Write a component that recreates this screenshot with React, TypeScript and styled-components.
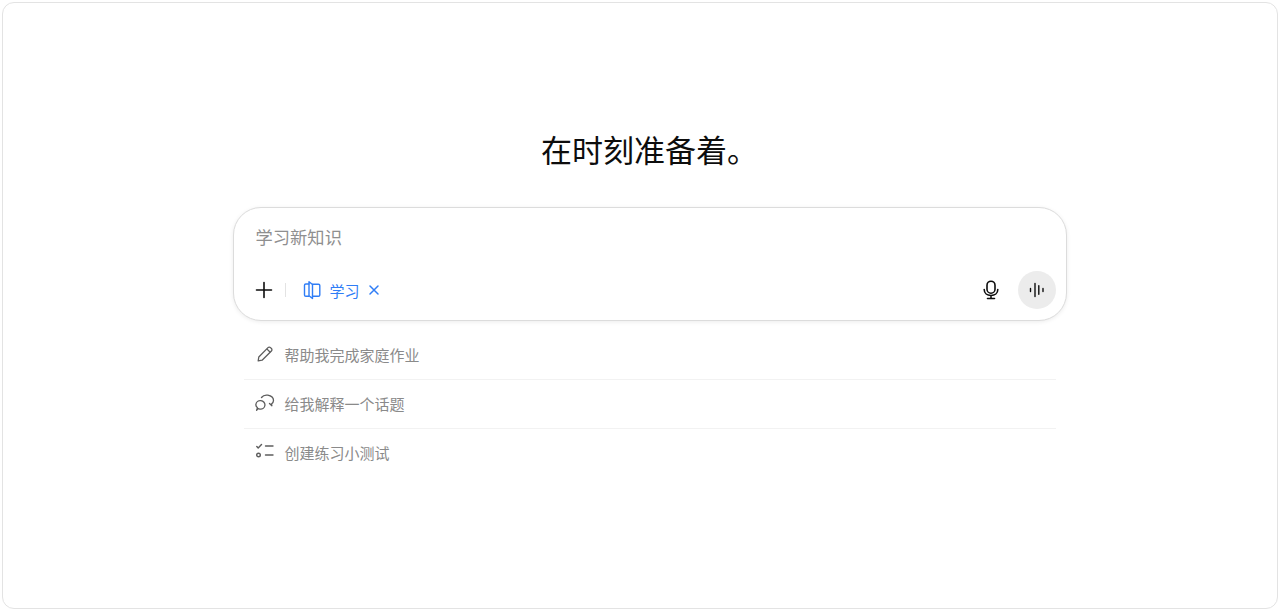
import React from "react";
import styled, { createGlobalStyle } from "styled-components";

const GlobalStyle = createGlobalStyle`
    html, body {
        margin: 0;
        padding: 0;
        height: 100%;
        background: #ffffff;
        font-family: "Inter", "Liberation Sans", "Noto Sans CJK SC", sans-serif;
    }
    #root {
        height: 100%;
    }
`;

const Page = styled.div`
    box-sizing: border-box;
    height: 611px;
    padding: 2px;
`;

const Frame = styled.main`
    box-sizing: border-box;
    height: 607px;
    border: 1px solid #e3e3e3;
    border-radius: 12px;
    display: flex;
    flex-direction: column;
    align-items: center;
    padding-top: 125px;
    padding-left: 19px;
`;

const Title = styled.h1`
    margin: 0 0 37px;
    font-size: 31px;
    line-height: 42px;
    font-weight: 400;
    color: #0d0d0d;
    font-family: "Noto Sans CJK SC", sans-serif;
`;

const Composer = styled.div`
    box-sizing: border-box;
    width: 834px;
    height: 114px;
    border: 1px solid #dcdcdc;
    border-radius: 28px;
    box-shadow: 0 1px 4px rgba(0, 0, 0, 0.08);
    display: flex;
    flex-direction: column;
    padding: 16px 10px 11px 21px;
    background: #fff;
`;

const Placeholder = styled.div`
    font-size: 17.3px;
    line-height: 26px;
    color: #8f8f8f;
    padding-left: 1px;
    font-family: "Noto Sans CJK SC", sans-serif;
`;

const ToolRow = styled.div`
    margin-top: auto;
    display: flex;
    align-items: center;
    height: 38px;
`;

const IconSlot = styled.span`
    display: inline-flex;
    color: #0d0d0d;
`;

const Divider = styled.span`
    width: 1px;
    height: 14px;
    background: #e3e3e3;
    margin: 0 16px 0 12px;
`;

const ModeChip = styled.div`
    display: flex;
    align-items: center;
    color: #2f7df6;
    font-size: 15px;
    font-family: "Noto Sans CJK SC", sans-serif;
`;

const ChipLabel = styled.span`
    margin: 0 8px 0 8px;
`;

const Spacer = styled.div`
    flex: 1;
`;

const VoiceButton = styled.div`
    width: 38px;
    height: 38px;
    border-radius: 50%;
    background: #ececec;
    margin-left: 17px;
    display: flex;
    align-items: center;
    justify-content: center;
    color: #0d0d0d;
`;

const Suggestions = styled.ul`
    list-style: none;
    box-sizing: border-box;
    width: 812px;
    margin: 10px 0 0;
    padding: 0;
`;

const Suggestion = styled.li`
    box-sizing: border-box;
    height: 49px;
    display: flex;
    align-items: center;
    gap: 10px;
    padding: 0 0 2px 11px;
    border-bottom: 1px solid #f2f2f2;
    color: #8a8a8a;
    font-size: 15px;
    font-family: "Noto Sans CJK SC", sans-serif;

    &:last-child {
        border-bottom-color: transparent;
    }
`;

const SuggestionIcon = styled.span`
    display: inline-flex;
    justify-content: center;
    width: 20px;
    color: #5d5d5d;
`;

const PlusIcon = () => (
    <svg width="18" height="18" viewBox="0 0 18 18" fill="none" stroke="currentColor" strokeWidth="1.6" strokeLinecap="round">
        <path d="M9 1.5v15M1.5 9h15" />
    </svg>
);

const BookIcon = () => (
    <svg width="20" height="20" viewBox="0 0 20 20" fill="none" stroke="currentColor" strokeWidth="1.4" strokeLinejoin="round" strokeLinecap="round">
        <path d="M7 4H3.8c-.7 0-1.3.6-1.3 1.3V15c0 .7.6 1.3 1.3 1.3h3" />
        <path d="M7 1.8l3.5 2.7v14L7 15.8V1.8Z" />
        <path d="M10.5 4.2h6c.7 0 1.3.6 1.3 1.3V15c0 .7-.6 1.3-1.3 1.3h-6" />
    </svg>
);

const CloseIcon = () => (
    <svg width="12" height="12" viewBox="0 0 12 12" fill="none" stroke="currentColor" strokeWidth="1.5" strokeLinecap="round">
        <path d="M2 2l8 8M10 2l-8 8" />
    </svg>
);

const MicIcon = () => (
    <svg width="20" height="20" viewBox="0 0 20 20" fill="none" stroke="currentColor" strokeWidth="1.6" strokeLinecap="round">
        <rect x="6" y="1.2" width="8" height="12" rx="4" />
        <path d="M3.2 9.5c0 3.7 3 6 6.8 6s6.8-2.3 6.8-6M10 15.5v3M6.5 18.5h7" />
    </svg>
);

const WaveIcon = () => (
    <svg width="18" height="18" viewBox="0 0 18 18" fill="none" stroke="currentColor" strokeWidth="1.4" strokeLinecap="round">
        <path d="M2.5 7.5v3M7 2.5v13M10.8 4.8v8.4M15 7.5v3" />
    </svg>
);

const PencilIcon = () => (
    <svg width="18" height="18" viewBox="0 0 18 18" fill="none" stroke="currentColor" strokeWidth="1.3" strokeLinejoin="round">
        <path d="M2.2 15.8l.6-3.8L12 2.6c.7-.7 1.8-.7 2.5 0l.9.9c.7.7.7 1.8 0 2.5l-9.3 9.2-3.9.6Z" />
        <path d="M10.8 3.9l3.4 3.4" />
    </svg>
);

const ChatIcon = () => (
    <svg width="20" height="18" viewBox="0 0 20 18" fill="none" stroke="currentColor" strokeWidth="1.3" strokeLinecap="round" strokeLinejoin="round">
        <path d="M1.6 16.2l.9-2.4C1.200 12.800.700 11.600.900 10.300c.3-2.400 2.500-4 5-3.700 2.500.3 4.300 2.400 4 4.800-.3 2.400-2.500 4-5 3.700-.7-.1-1.300-.3-1.800-.6l-1.500 1.700Z" />
        <path d="M6.500 3.500C8 1.500 10.500.8 12.800 1.200 16 1.800 18.500 4 18.500 6.500c0 1.500-.7 2.500-2 3.500l.4 1.800-2.400-2.300" />
    </svg>
);

const QuizIcon = () => (
    <svg width="18" height="18" viewBox="0 0 18 18" fill="none" stroke="currentColor" strokeWidth="1.4" strokeLinecap="round" strokeLinejoin="round">
        <path d="M.8 3.500L2.200 5l3.300-3.500M9.500 3h7.500M9.500 12h7.500" />
        <circle cx="2.500" cy="12" r="1.800" />
    </svg>
);

const suggestions = [
    { id: "homework", icon: <PencilIcon />, text: "帮助我完成家庭作业" },
    { id: "topic", icon: <ChatIcon />, text: "给我解释一个话题" },
    { id: "quiz", icon: <QuizIcon />, text: "创建练习小测试" },
];

export default function App() {
    return (
        <>
            <GlobalStyle />
            <Page>
                <Frame>
                    <Title>在时刻准备着。</Title>
                    <Composer>
                        <Placeholder>学习新知识</Placeholder>
                        <ToolRow>
                            <IconSlot><PlusIcon /></IconSlot>
                            <Divider />
                            <ModeChip>
                                <BookIcon />
                                <ChipLabel>学习</ChipLabel>
                                <CloseIcon />
                            </ModeChip>
                            <Spacer />
                            <IconSlot><MicIcon /></IconSlot>
                            <VoiceButton><WaveIcon /></VoiceButton>
                        </ToolRow>
                    </Composer>
                    <Suggestions>
                        {suggestions.map((item) => (
                            <Suggestion key={item.id}>
                                <SuggestionIcon>{item.icon}</SuggestionIcon>
                                {item.text}
                            </Suggestion>
                        ))}
                    </Suggestions>
                </Frame>
            </Page>
        </>
    );
}
